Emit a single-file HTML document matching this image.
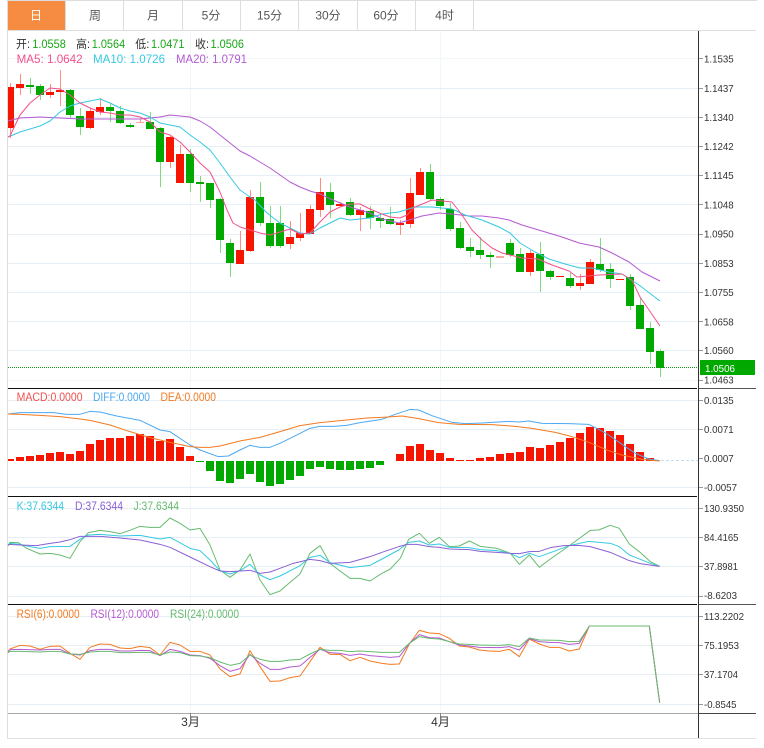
<!DOCTYPE html>
<html><head><meta charset="utf-8"><title>K</title>
<style>
html,body{margin:0;padding:0;background:#fff;width:764px;height:748px;overflow:hidden}
svg{display:block;position:absolute;left:0;top:0}
text{font-family:"Liberation Sans","Noto Sans CJK SC",sans-serif}
.ax text{font-size:10.5px;fill:#333}
.lg text{font-size:11.5px}
.tb text{font-size:12px;fill:#555;text-anchor:middle}
.l{fill:none;stroke-width:3;stroke-linejoin:round}
</style></head><body>
<svg width="764" height="748" viewBox="0 0 764 748" xmlns="http://www.w3.org/2000/svg">
<!-- frame -->
<g shape-rendering="crispEdges">
<rect x="7" y="0" width="750" height="1" fill="#ddd"/>
<rect x="7" y="0" width="1" height="739" fill="#ddd"/>
<rect x="7" y="738" width="749" height="1" fill="#e2e2e2"/>
<rect x="8" y="30" width="748" height="1" fill="#ddd"/>
<rect x="8" y="1" width="57" height="29" fill="#f58c42"/>
<path fill="#ddd" d="M65 1h1v29h-1zM123 1h1v29h-1zM182 1h1v29h-1zM240 1h1v29h-1zM298 1h1v29h-1zM357 1h1v29h-1zM415 1h1v29h-1zM473 1h1v29h-1z"/>
<!-- grid -->
<path fill="#f1f6f9" d="M8 58h690v1H8zM8 380h690v1H8zM190 31h1v682h-1zM440 31h1v682h-1z"/>
<path fill="#e6eff5" d="M8 88h690v1H8zM8 117h690v1H8zM8 146h690v1H8zM8 175h690v1H8zM8 204h690v1H8zM8 234h690v1H8zM8 263h690v1H8zM8 292h690v1H8zM8 321h690v1H8zM8 350h690v1H8zM8 400h690v1H8zM8 429h690v1H8zM8 487h690v1H8zM8 508h690v1H8zM8 537h690v1H8zM8 566h690v1H8zM8 596h690v1H8zM8 616h690v1H8zM8 645h690v1H8zM8 674h690v1H8zM8 704h690v1H8z"/>
<!-- wicks -->
<path fill="#ff8d82" d="M10 83h1V138h-1zM20 74h1V95h-1zM50 84h1V98h-1zM60 70h1V106h-1zM90 108h1V129h-1zM100 98h1V115h-1zM140 119h1V123h-1zM170 136h1V168h-1zM180 145h1V183h-1zM240 231h1V264h-1zM250 190h1V252h-1zM290 221h1V249h-1zM300 213h1V241h-1zM310 205h1V234h-1zM320 178h1V217h-1zM340 202h1V206h-1zM360 207h1V231h-1zM400 220h1V235h-1zM410 178h1V228h-1zM420 168h1V195h-1zM530 250h1V276h-1zM580 274h1V290h-1zM590 259h1V284h-1z"/>
<path fill="#7ddc7d" d="M30 78h1V94h-1zM40 84h1V100h-1zM70 89h1V119h-1zM80 108h1V135h-1zM110 103h1V122h-1zM120 106h1V124h-1zM130 123h1V128h-1zM150 112h1V129h-1zM160 127h1V187h-1zM190 149h1V192h-1zM200 176h1V202h-1zM210 183h1V208h-1zM220 198h1V253h-1zM230 239h1V277h-1zM260 182h1V226h-1zM270 206h1V248h-1zM280 206h1V248h-1zM330 183h1V218h-1zM350 198h1V216h-1zM370 206h1V229h-1zM380 214h1V228h-1zM390 207h1V225h-1zM430 164h1V200h-1zM440 197h1V210h-1zM450 203h1V231h-1zM460 222h1V249h-1zM470 238h1V257h-1zM480 237h1V259h-1zM490 252h1V268h-1zM510 239h1V257h-1zM520 248h1V272h-1zM540 242h1V292h-1zM550 270h1V280h-1zM570 273h1V288h-1zM600 238h1V272h-1zM610 263h1V288h-1zM630 274h1V310h-1zM640 297h1V329h-1zM650 322h1V364h-1zM660 349h1V377h-1z"/>
<!-- bodies -->
<path fill="#f51500" d="M8 87h6V128h-6zM16 84h8V88h-8zM46 92h8V95h-8zM56 90h8V92h-8zM86 111h8V128h-8zM96 107h8V112h-8zM166 137h8V162h-8zM176 154h8V183h-8zM236 250h8V264h-8zM246 197h8V251h-8zM286 237h8V244h-8zM296 233h8V238h-8zM306 209h8V234h-8zM316 192h8V210h-8zM336 204h8V206h-8zM356 210h8V215h-8zM396 223h8V225h-8zM406 193h8V224h-8zM416 172h8V195h-8zM526 253h8V272h-8zM556 276h8V277h-8zM576 283h8V286h-8zM586 262h8V284h-8zM616 279h8V280h-8z"/>
<path fill="#ffa79e" d="M136 122h8V123h-8zM496 256h8V258h-8z"/>
<path fill="#00a800" d="M26 85h8V87h-8zM36 86h8V95h-8zM66 90h8V115h-8zM76 116h8V127h-8zM106 107h8V111h-8zM116 111h8V123h-8zM126 125h8V127h-8zM146 122h8V129h-8zM156 128h8V162h-8zM186 154h8V183h-8zM196 182h8V184h-8zM206 183h8V200h-8zM216 199h8V240h-8zM226 243h8V263h-8zM256 197h8V223h-8zM266 223h8V246h-8zM276 223h8V246h-8zM326 192h8V205h-8zM346 202h8V215h-8zM366 211h8V218h-8zM376 218h8V221h-8zM386 219h8V224h-8zM426 172h8V199h-8zM436 199h8V206h-8zM446 209h8V229h-8zM456 228h8V248h-8zM466 247h8V251h-8zM476 250h8V255h-8zM486 255h8V257h-8zM506 243h8V255h-8zM516 254h8V272h-8zM536 254h8V271h-8zM546 271h8V277h-8zM566 278h8V286h-8zM596 264h8V270h-8zM606 269h8V279h-8zM626 277h8V306h-8zM636 305h8V329h-8zM646 328h8V352h-8zM656 351h8V368h-8z"/>
<!-- MACD bars -->
<path fill="#f51500" d="M8 459h6V461h-6zM16 457h8V461h-8zM26 456h8V461h-8zM36 455h8V461h-8zM46 453h8V461h-8zM56 452h8V461h-8zM66 454h8V461h-8zM76 451h8V461h-8zM86 444h8V461h-8zM96 440h8V461h-8zM106 438h8V461h-8zM116 438h8V461h-8zM126 436h8V461h-8zM136 434h8V461h-8zM146 436h8V461h-8zM156 441h8V461h-8zM166 439h8V461h-8zM176 447h8V461h-8zM186 456h8V461h-8zM396 454h8V461h-8zM406 446h8V461h-8zM416 444h8V461h-8zM426 450h8V461h-8zM436 453h8V461h-8zM446 458h8V461h-8zM456 460h8V461h-8zM466 460h8V461h-8zM476 458h8V461h-8zM486 457h8V461h-8zM496 454h8V461h-8zM506 453h8V461h-8zM516 452h8V461h-8zM526 447h8V461h-8zM536 448h8V461h-8zM546 445h8V461h-8zM556 442h8V461h-8zM566 438h8V461h-8zM576 433h8V461h-8zM586 427h8V461h-8zM596 428h8V461h-8zM606 431h8V461h-8zM616 435h8V461h-8zM626 444h8V461h-8zM636 452h8V461h-8zM646 458h8V461h-8z"/>
<path fill="#00a800" d="M196 461h8V462h-8zM206 461h8V471h-8zM216 461h8V481h-8zM226 461h8V483h-8zM236 461h8V479h-8zM246 461h8V474h-8zM256 461h8V482h-8zM266 461h8V486h-8zM276 461h8V484h-8zM286 461h8V480h-8zM296 461h8V476h-8zM306 461h8V469h-8zM316 461h8V467h-8zM326 461h8V469h-8zM336 461h8V470h-8zM346 461h8V470h-8zM356 461h8V469h-8zM366 461h8V468h-8zM376 461h8V465h-8z"/>
<!-- dark frame lines -->
<rect x="8" y="388" width="689" height="1" fill="#111"/>
<rect x="8" y="496" width="689" height="1" fill="#111"/>
<rect x="8" y="604" width="689" height="1" fill="#111"/>
<rect x="699" y="388" width="57" height="1" fill="#555"/>
<rect x="699" y="604" width="57" height="1" fill="#555"/>
<rect x="8" y="713" width="690" height="1" fill="#aaa"/>
<rect x="698" y="713" width="58" height="1" fill="#444"/>
<rect x="698" y="31" width="1" height="707" fill="#333"/>
<path fill="#888" d="M190 713h1v4h-1zM440 713h1v4h-1z"/>
<path fill="#999" d="M699 58h4v1h-4zM699 88h4v1h-4zM699 117h4v1h-4zM699 146h4v1h-4zM699 175h4v1h-4zM699 204h4v1h-4zM699 234h4v1h-4zM699 263h4v1h-4zM699 292h4v1h-4zM699 321h4v1h-4zM699 350h4v1h-4zM699 380h4v1h-4zM699 400h4v1h-4zM699 429h4v1h-4zM699 458h4v1h-4zM699 487h4v1h-4zM699 508h4v1h-4zM699 537h4v1h-4zM699 566h4v1h-4zM699 596h4v1h-4zM699 616h4v1h-4zM699 645h4v1h-4zM699 674h4v1h-4zM699 704h4v1h-4z"/>
<rect x="700" y="360" width="55" height="15" fill="#00a800"/>
</g>
<line x1="661" y1="460.5" x2="698" y2="460.5" stroke="#bfe0f0" stroke-dasharray="3 2"/>
<line x1="8" y1="367.5" x2="698" y2="367.5" stroke="#139a13" stroke-dasharray="1 1"/>
<!-- MAs -->
<g fill="none" stroke-width="1" stroke-linejoin="round">
<polyline stroke="#b45ad2" points="8,121 20,118 40,117 60,118 80,119 100,119 120,119 140,119 160,117 170,115 180,116 190,117 200,121 210,127 220,135 230,143 240,151 250,156 260,162 270,168 280,175 290,182 300,187 310,191 320,194 333,200 350,207 370,213 382,219 399,223 409,220 422,216 439,213 452,214 469,216 482,216 499,218 509,220 522,225 542,231 562,237 579,243 599,247 612,253 629,262 642,272 660,281"/>
<polyline stroke="#36c9e2" points="8,137 20,132 40,126 50,121 60,112 70,106 80,103 90,101 100,99 110,103 120,108 130,111 140,113 150,117 160,123 170,125 180,127 190,135 200,142 210,150 220,163 230,177 240,190 250,197 255,200 267,213 280,223 290,228 300,233 310,234 320,228 330,223 340,218 350,220 360,219 370,218 382,214 399,212 415,207 432,207 452,209 465,215 482,220 499,227 510,233 520,243 535,252 549,259 565,264 580,268 592,268 609,272 622,274 639,285 660,301"/>
<polyline stroke="#f2508c" points="8,137 10,136 20,115 30,103 40,95 50,88 60,89 70,95 80,103 90,108 100,112 110,113 120,115 130,115 140,117 150,122 160,132 170,135 180,142 190,152 200,163 210,172 220,192 227,210 233,223 240,227 250,230 260,233 270,235 280,232 290,229 300,234 310,233 320,222 330,212 340,207 350,204 360,204 370,209 382,214 390,217 400,218 407,215 415,207 432,200 452,202 462,215 472,230 482,240 492,248 502,253 522,258 538,259 552,265 569,271 577,277 599,275 622,274 632,280 640,297 649,310 660,326"/>
</g>
<g transform="translate(0,385) scale(0.33333)">
<polyline class="l" stroke="#4da8f0" points="24,87 60,83 100,83 160,83 200,88 240,88 270,79 300,81 350,93 420,106 480,135 510,140 570,180 600,195 655,215 685,213 720,195 750,181 780,187 810,187 840,175 880,155 930,130 960,124 1000,124 1040,121 1080,113 1146,103"/>
<polyline class="l" stroke="#f47a20" points="24,87 60,88 120,91 180,95 240,102 270,106 330,120 390,140 450,158 510,172 570,185 600,187 630,187 660,183 720,168 780,157 840,140 900,122 960,113 1040,105 1100,99 1146,97"/>
</g>
<g transform="translate(382,385) scale(0.33333)">
<polyline class="l" stroke="#4da8f0" points="0,103 40,88 85,73 110,75 150,92 210,112 250,116 300,114 380,109 410,111 440,108 480,115 560,116 620,118 650,133 680,150 720,178 760,205 800,222 833,227"/>
<polyline class="l" stroke="#f47a20" points="0,97 60,93 110,101 170,113 230,118 330,119 400,124 450,130 520,142 570,155 620,172 680,197 720,210 780,223 833,228"/>
</g>
<g transform="translate(0,495) scale(0.33333)">
<polyline class="l" stroke="#66bb6e" points="24,153 30,142 55,143 80,160 120,177 150,175 180,180 210,190 240,140 265,113 300,106 330,110 360,116 390,106 420,94 450,97 480,97 510,69 540,85 570,105 600,100 630,150 660,225 690,247 720,225 750,177 780,255 810,299 840,288 870,262 900,237 930,175 960,152 990,205 1020,228 1050,250 1080,250 1110,258 1146,235"/>
<polyline class="l" stroke="#36c9e2" points="24,150 30,145 60,148 90,155 120,160 150,155 210,154 240,133 265,120 300,118 360,123 420,121 480,132 510,127 570,160 600,167 630,195 660,227 690,237 720,227 750,208 780,240 810,254 840,243 900,212 930,187 960,181 990,203 1050,218 1110,211 1146,192"/>
<polyline class="l" stroke="#8a60d2" points="24,148 60,150 110,152 150,145 180,141 210,134 240,124 300,124 360,129 420,135 480,148 510,157 570,186 630,215 660,228 690,230 750,226 780,235 810,231 840,220 880,205 930,193 960,197 990,205 1050,202 1110,185 1146,172"/>
</g>
<g transform="translate(382,495) scale(0.33333)">
<polyline class="l" stroke="#66bb6e" points="0,235 25,222 55,190 80,133 112,115 142,145 172,127 202,155 232,153 262,138 295,154 345,160 385,175 412,208 442,180 472,217 505,192 565,150 625,106 650,105 685,91 712,100 742,147 772,170 805,200 833,214"/>
<polyline class="l" stroke="#36c9e2" points="0,192 50,165 80,142 112,138 142,150 172,147 202,157 262,158 295,164 345,167 385,175 412,188 442,175 472,185 565,151 620,139 685,145 712,155 742,180 805,205 833,214"/>
<polyline class="l" stroke="#8a60d2" points="0,172 50,155 75,148 105,148 142,155 172,157 202,162 262,164 295,169 345,172 385,175 412,176 442,170 472,169 505,158 545,152 590,151 625,155 685,172 742,197 775,206 833,214"/>
</g>
<g transform="translate(0,600) scale(0.33333)">
<polyline class="l" stroke="#f47a20" points="24,155 30,147 60,136 90,138 120,148 150,139 180,138 210,160 240,178 270,142 300,132 330,133 360,144 390,146 420,139 450,143 480,165 510,127 540,135 570,154 600,154 630,165 660,207 690,230 720,222 750,152 780,200 810,244 840,243 870,233 900,228 930,185 960,142 990,163 1020,163 1050,182 1080,172 1110,183 1146,190"/>
<polyline class="l" stroke="#b45ad2" points="24,155 30,149 60,148 120,150 150,148 180,148 210,162 240,165 270,152 300,148 330,148 360,153 390,153 420,151 450,152 480,167 510,148 540,154 570,165 600,167 630,175 660,197 690,214 720,206 750,163 780,190 810,208 840,208 870,201 900,198 930,172 960,148 990,158 1020,160 1050,166 1080,162 1110,167 1146,170"/>
<polyline class="l" stroke="#66bb6e" points="24,158 30,154 60,154 120,156 150,154 180,154 210,162 240,163 270,156 300,154 330,154 360,158 390,158 420,157 450,157 480,165 510,156 540,158 570,167 600,168 630,173 660,186 690,196 720,190 750,165 780,178 810,184 840,184 870,180 900,178 930,162 960,148 990,151 1020,151 1050,155 1080,153 1110,155 1146,157"/>
</g>
<g transform="translate(382,600) scale(0.33333)">
<polyline class="l" stroke="#f47a20" points="0,190 25,193 52,192 82,132 112,91 142,99 172,101 202,115 232,138 262,141 292,150 322,153 352,154 382,148 412,170 442,117 472,132 502,142 532,142 562,153 592,147 622,78 802,78 833,308"/>
<polyline class="l" stroke="#b45ad2" points="0,170 25,172 52,170 82,130 112,104 142,113 172,114 202,125 232,135 262,138 292,142 352,143 382,140 412,150 442,116 472,125 502,127 532,128 562,133 592,130 622,78 802,78 833,308"/>
<polyline class="l" stroke="#66bb6e" points="0,157 52,157 82,130 112,110 142,115 172,117 202,125 232,132 262,133 292,135 352,136 382,134 412,140 442,114 472,120 532,121 562,125 592,124 622,78 802,78 833,308"/>
</g>
<!-- tabs -->
<g class="tb">
<text x="36" y="19.5" style="fill:#fff">日</text>
<text x="95" y="19.5">周</text>
<text x="153" y="19.5">月</text>
<text x="211" y="19.5">5分</text>
<text x="269.5" y="19.5">15分</text>
<text x="328" y="19.5">30分</text>
<text x="386" y="19.5">60分</text>
<text x="444.5" y="19.5">4时</text>
</g>
<!-- legends -->
<g class="lg">
<text x="16" y="48" fill="#333" textLength="14" lengthAdjust="spacingAndGlyphs">开:</text>
<text x="32.3" y="48" fill="#18a818" textLength="33.5" lengthAdjust="spacingAndGlyphs">1.0558</text>
<text x="76" y="48" fill="#333" textLength="14" lengthAdjust="spacingAndGlyphs">高:</text>
<text x="91.7" y="48" fill="#18a818" textLength="33.5" lengthAdjust="spacingAndGlyphs">1.0564</text>
<text x="135.3" y="48" fill="#333" textLength="14" lengthAdjust="spacingAndGlyphs">低:</text>
<text x="151" y="48" fill="#18a818" textLength="33.5" lengthAdjust="spacingAndGlyphs">1.0471</text>
<text x="195" y="48" fill="#333" textLength="14" lengthAdjust="spacingAndGlyphs">收:</text>
<text x="210.5" y="48" fill="#18a818" textLength="33.5" lengthAdjust="spacingAndGlyphs">1.0506</text>
<text x="16.6" y="63" fill="#f2508c" textLength="66" lengthAdjust="spacingAndGlyphs">MA5: 1.0642</text>
<text x="93" y="63" fill="#36c9e2" textLength="72" lengthAdjust="spacingAndGlyphs">MA10: 1.0726</text>
<text x="176" y="63" fill="#b45ad2" textLength="71" lengthAdjust="spacingAndGlyphs">MA20: 1.0791</text>
<text x="16.6" y="401" fill="#f25050" textLength="66" lengthAdjust="spacingAndGlyphs">MACD:0.0000</text>
<text x="93" y="401" fill="#4da8f0" textLength="57" lengthAdjust="spacingAndGlyphs">DIFF:0.0000</text>
<text x="160.5" y="401" fill="#f47a20" textLength="55.5" lengthAdjust="spacingAndGlyphs">DEA:0.0000</text>
<text x="16.6" y="510" fill="#36c9e2" textLength="47.5" lengthAdjust="spacingAndGlyphs">K:37.6344</text>
<text x="75" y="510" fill="#8a60d2" textLength="48" lengthAdjust="spacingAndGlyphs">D:37.6344</text>
<text x="133.5" y="510" fill="#66bb6e" textLength="45.5" lengthAdjust="spacingAndGlyphs">J:37.6344</text>
<text x="16.6" y="618" fill="#f47a20" textLength="63" lengthAdjust="spacingAndGlyphs">RSI(6):0.0000</text>
<text x="90.5" y="618" fill="#b45ad2" textLength="68.5" lengthAdjust="spacingAndGlyphs">RSI(12):0.0000</text>
<text x="170" y="618" fill="#66bb6e" textLength="69" lengthAdjust="spacingAndGlyphs">RSI(24):0.0000</text>
</g>
<!-- axis -->
<g class="ax">
<text x="704" y="62.5" textLength="29.7" lengthAdjust="spacingAndGlyphs">1.1535</text>
<text x="704" y="92" textLength="29.7" lengthAdjust="spacingAndGlyphs">1.1437</text>
<text x="704" y="121" textLength="29.7" lengthAdjust="spacingAndGlyphs">1.1340</text>
<text x="704" y="150" textLength="29.7" lengthAdjust="spacingAndGlyphs">1.1242</text>
<text x="704" y="179" textLength="29.7" lengthAdjust="spacingAndGlyphs">1.1145</text>
<text x="704" y="208.5" textLength="29.7" lengthAdjust="spacingAndGlyphs">1.1048</text>
<text x="704" y="237.5" textLength="29.7" lengthAdjust="spacingAndGlyphs">1.0950</text>
<text x="704" y="267" textLength="29.7" lengthAdjust="spacingAndGlyphs">1.0853</text>
<text x="704" y="296" textLength="29.7" lengthAdjust="spacingAndGlyphs">1.0755</text>
<text x="704" y="325.5" textLength="29.7" lengthAdjust="spacingAndGlyphs">1.0658</text>
<text x="704" y="354" textLength="29.7" lengthAdjust="spacingAndGlyphs">1.0560</text>
<text x="704" y="383.5" textLength="29.7" lengthAdjust="spacingAndGlyphs">1.0463</text>
<text x="705" y="372" textLength="30" lengthAdjust="spacingAndGlyphs" style="fill:#fff">1.0506</text>
<text x="704" y="404" textLength="29.7" lengthAdjust="spacingAndGlyphs">0.0135</text>
<text x="704" y="433" textLength="29.7" lengthAdjust="spacingAndGlyphs">0.0071</text>
<text x="704" y="462" textLength="29.7" lengthAdjust="spacingAndGlyphs">0.0007</text>
<text x="704" y="491" textLength="33" lengthAdjust="spacingAndGlyphs">-0.0057</text>
<text x="704" y="512" textLength="40" lengthAdjust="spacingAndGlyphs">130.9350</text>
<text x="704" y="541" textLength="34.5" lengthAdjust="spacingAndGlyphs">84.4165</text>
<text x="704" y="570" textLength="34" lengthAdjust="spacingAndGlyphs">37.8981</text>
<text x="704" y="599" textLength="33" lengthAdjust="spacingAndGlyphs">-8.6203</text>
<text x="704" y="620" textLength="40" lengthAdjust="spacingAndGlyphs">113.2202</text>
<text x="704" y="649" textLength="35" lengthAdjust="spacingAndGlyphs">75.1953</text>
<text x="704" y="678" textLength="34" lengthAdjust="spacingAndGlyphs">37.1704</text>
<text x="704" y="708" textLength="32.5" lengthAdjust="spacingAndGlyphs">-0.8545</text>
</g>
<g style="font-size:12px" fill="#333" text-anchor="middle">
<text x="190.5" y="726">3月</text>
<text x="440.5" y="726">4月</text>
</g>
</svg>
</body></html>
